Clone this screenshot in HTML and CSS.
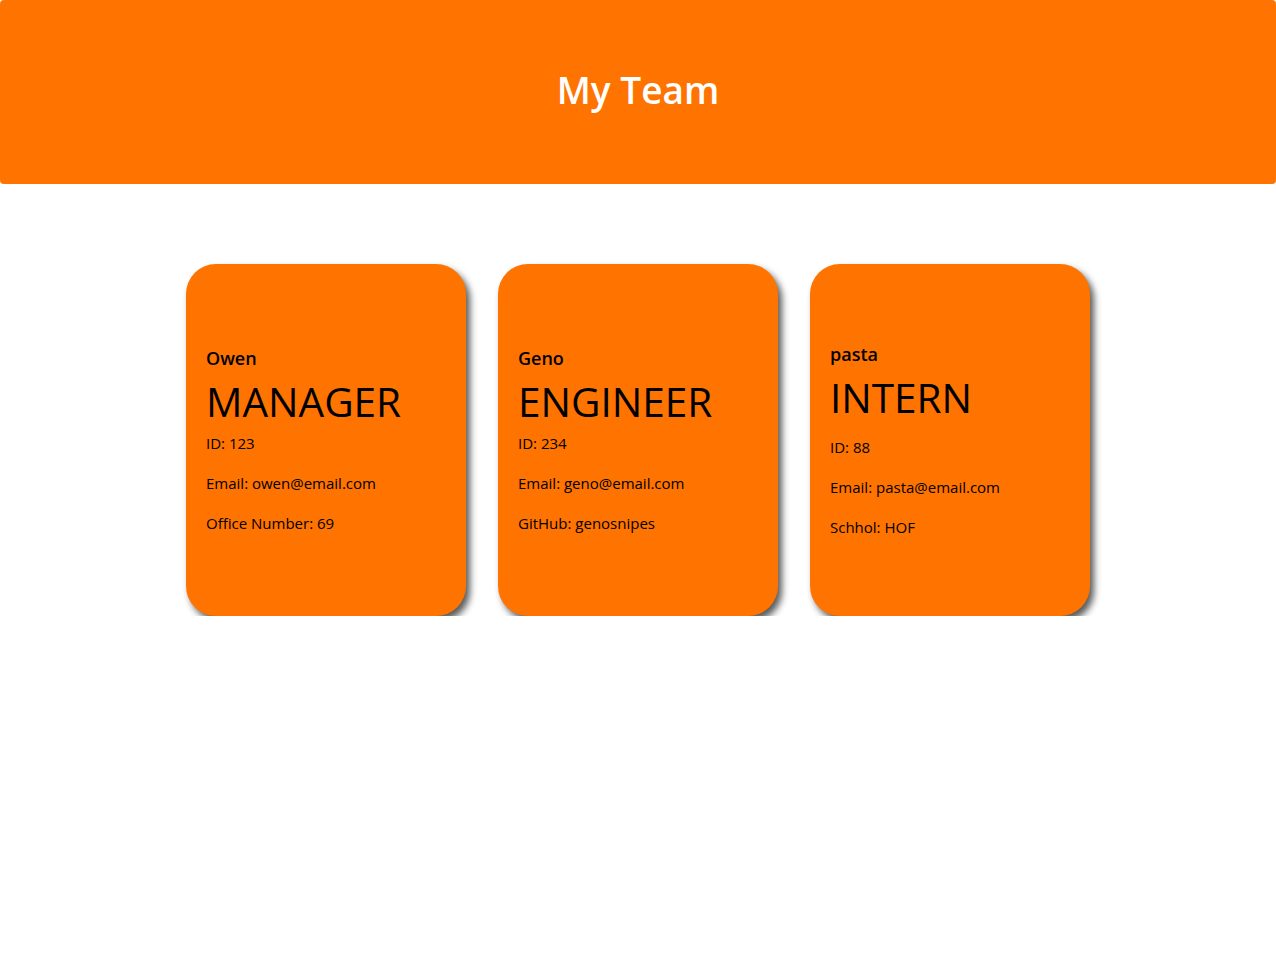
FILE: index.html
```html
<!DOCTYPE html>
<html lang="en">
<head>
<meta charset="utf-8">
<title>My Team</title>
<link rel="stylesheet" href="styles.css">
</head>
<body>
<header class="hero">
  <h1 class="hero-title">My Team</h1>
</header>
<main class="team">
  <article class="card">
    <h5 class="card-name">Owen</h5>
    <h1 class="card-role">MANAGER</h1>
    <p class="card-line">ID: 123</p>
    <p class="card-line">Email: owen@email.com</p>
    <p class="card-line">Office Number: 69</p>
  </article>
  <article class="card">
    <h5 class="card-name">Geno</h5>
    <h1 class="card-role">ENGINEER</h1>
    <p class="card-line">ID: 234</p>
    <p class="card-line">Email: geno@email.com</p>
    <p class="card-line">GitHub: genosnipes</p>
  </article>
  <article class="card card-intern">
    <h5 class="card-name">pasta</h5>
    <h1 class="card-role">INTERN</h1>
    <p class="card-line">ID: 88</p>
    <p class="card-line">Email: pasta@email.com</p>
    <p class="card-line">Schhol: HOF</p>
  </article>
</main>
</body>
</html>
```
FILE: styles.css
```css
* { box-sizing: border-box; }
html, body { margin: 0; padding: 0; }
body {
  font-family: "Open Sans", "Noto Sans", sans-serif;
  color: #000;
  background: #fff;
  font-size: 15px;
  line-height: 1.5;
}
.hero {
  background: #ff7300;
  height: 184px;
  border-radius: 4px;
  display: flex;
  align-items: center;
  justify-content: center;
  margin-bottom: 80px;
}
.hero-title {
  margin: 0 0 4px;
  color: #fff;
  font-size: 37px;
  font-weight: 600;
  line-height: 1.2;
}
.team {
  display: flex;
  justify-content: center;
  gap: 32px;
}
.card {
  width: 280px;
  height: 352px;
  background: #ff7300;
  border-radius: 30px;
  box-shadow: 4px 5px 7px rgba(0, 0, 0, 0.65);
  padding: 82px 20px 20px;
}
.card-name {
  margin: 0 0 8px;
  font-size: 18px;
  font-weight: 600;
  line-height: 24px;
}
.card-role {
  margin: 0 0 5px;
  font-size: 40.5px;
  font-weight: 400;
  line-height: 48px;
}
.card-line {
  margin: 0 0 16px;
  line-height: 24px;
}
.card-intern { padding-top: 78px; }
.card-intern .card-role { margin-bottom: 13px; }
```
